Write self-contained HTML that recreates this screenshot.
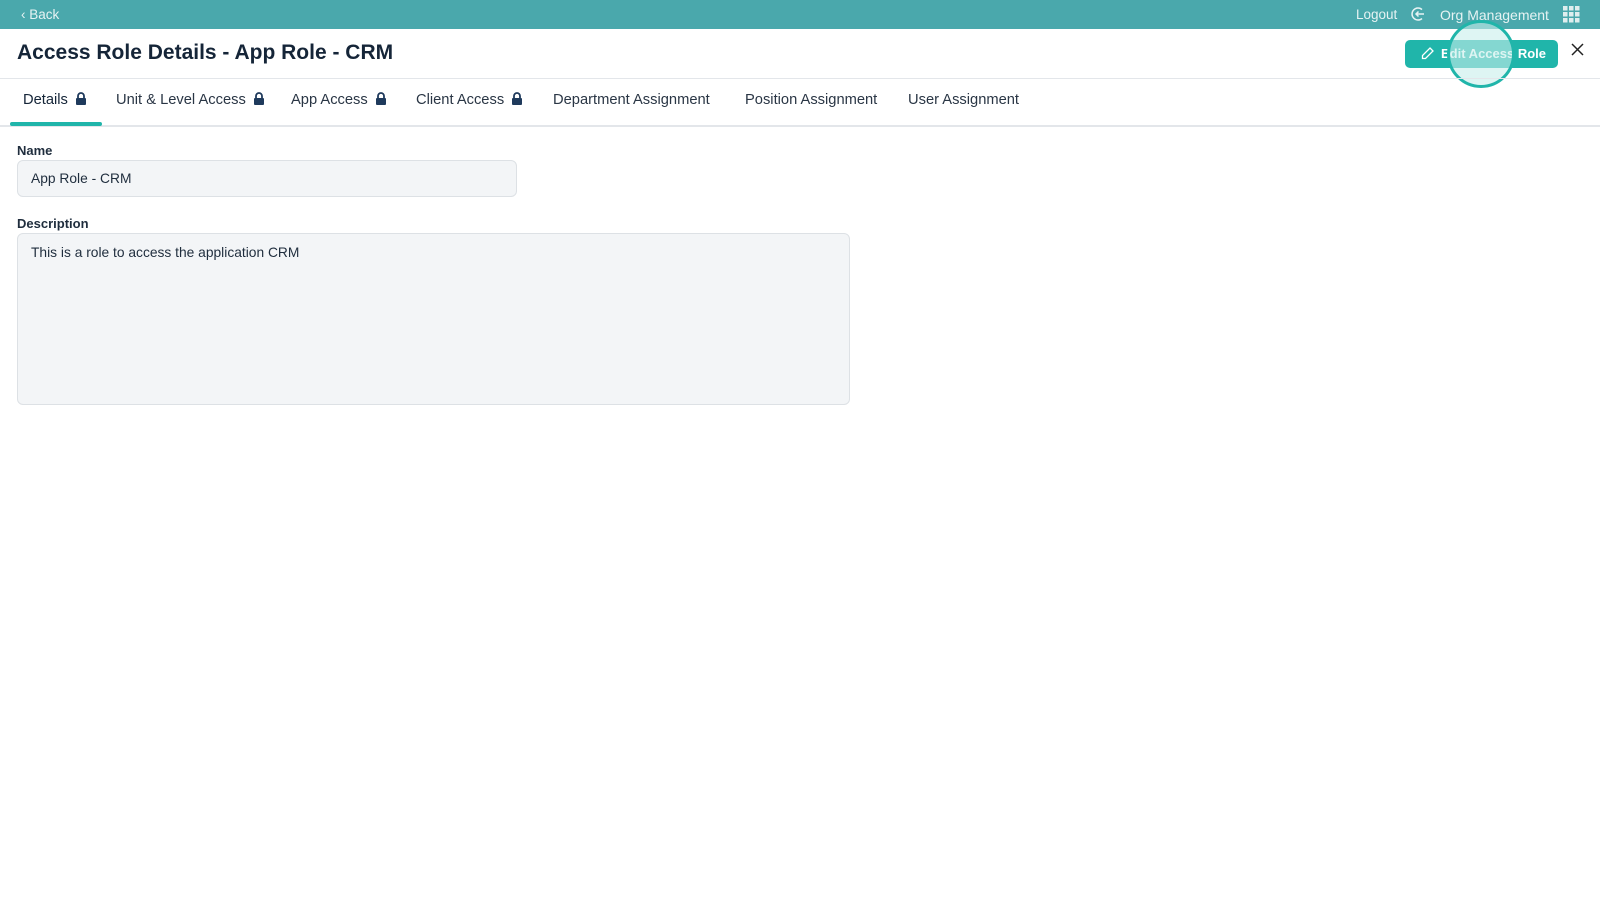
<!DOCTYPE html>
<html><head><style>
*{box-sizing:border-box;margin:0;padding:0}
body{width:1600px;height:900px;background:#fff;font-family:"Liberation Sans",sans-serif;color:#1f2d3d;position:relative;overflow:hidden}
.top{position:absolute;left:0;top:0;width:1600px;height:29px;background:#4aa8ac;color:#e6f3f3;font-size:13.5px}
.abs{position:absolute}
.tab{position:absolute;top:92px;font-size:14.7px;color:#2a3645;white-space:nowrap}
.lock{display:inline-block;vertical-align:-1px;margin-left:7px}
.lbl{position:absolute;font-size:13px;font-weight:bold;color:#1f2d3d}
.inp{position:absolute;background:#f3f5f7;border:1px solid #dde1e5;border-radius:6px;font-size:13.8px;color:#1f2d3d;padding-left:13px}
</style></head><body>
<div class="top">
<div class="abs" style="left:21px;top:7px">‹ Back</div>
<div class="abs" style="left:1356px;top:7px">Logout</div>
<svg class="abs" style="left:1410px;top:6px" width="16" height="16" viewBox="0 0 16 16" fill="none" stroke="#e6f3f3" stroke-width="1.5"><path d="M12 3.5A6 6 0 1 0 12 12.5"/><path d="M14 8H6M8.5 5.5L6 8l2.5 2.5"/></svg>
<div class="abs" style="left:1440px;top:7px;font-size:14px">Org Management</div>
<svg class="abs" style="left:1563px;top:6px" width="17" height="17" viewBox="0 0 17 17" fill="#dfeeee"><rect x="0" y="0" width="4.5" height="4.5"/><rect x="6" y="0" width="4.5" height="4.5"/><rect x="12" y="0" width="4.5" height="4.5"/><rect x="0" y="6" width="4.5" height="4.5"/><rect x="6" y="6" width="4.5" height="4.5"/><rect x="12" y="6" width="4.5" height="4.5"/><rect x="0" y="12" width="4.5" height="4.5"/><rect x="6" y="12" width="4.5" height="4.5"/><rect x="12" y="12" width="4.5" height="4.5"/></svg>
</div>
<div class="abs" style="left:17px;top:41px;font-size:21px;font-weight:bold;color:#152538">Access Role Details - App Role - CRM</div>
<div class="abs" style="left:1405px;top:40px;width:153px;height:28px;background:#20b5aa;border-radius:5px;color:#fff;font-size:13px;font-weight:bold;line-height:28px;padding-left:36px">Edit Access Role</div>
<svg class="abs" style="left:1420px;top:46px" width="15" height="15" viewBox="0 0 15 15" fill="none" stroke="#fff" stroke-width="1.3"><path d="M10 2l3 3-7.5 7.5H2.5v-3z"/></svg>
<div class="abs" style="left:1447px;top:20px;width:68px;height:68px;border-radius:50%;border:3px solid #20b5aa;background:rgba(200,238,235,0.6)"></div>
<svg class="abs" style="left:1571px;top:43px" width="13" height="13" viewBox="0 0 13 13" stroke="#222" stroke-width="1.5"><path d="M1 1l11 11M12 1L1 12"/></svg>
<div class="abs" style="left:0;top:78px;width:1600px;height:1px;background:#e3e6ea"></div>
<div class="abs" style="left:0;top:125px;width:1600px;height:2px;background:#e3e6ea"></div>
<div class="abs" style="left:10px;top:122px;width:92px;height:4px;background:#20b5aa;border-radius:3px"></div>
<div class="tab" style="left:23px;color:#152538">Details<svg class="lock" width="12" height="13" viewBox="0 0 12 13"><path d="M3 6V4a3 3 0 0 1 6 0v2" fill="none" stroke="#1f3a5c" stroke-width="1.8"/><rect x="1" y="6" width="10" height="7" rx="1" fill="#1f3a5c"/></svg></div>
<div class="tab" style="left:116px">Unit &amp; Level Access<svg class="lock" width="12" height="13" viewBox="0 0 12 13"><path d="M3 6V4a3 3 0 0 1 6 0v2" fill="none" stroke="#1f3a5c" stroke-width="1.8"/><rect x="1" y="6" width="10" height="7" rx="1" fill="#1f3a5c"/></svg></div>
<div class="tab" style="left:291px">App Access<svg class="lock" width="12" height="13" viewBox="0 0 12 13"><path d="M3 6V4a3 3 0 0 1 6 0v2" fill="none" stroke="#1f3a5c" stroke-width="1.8"/><rect x="1" y="6" width="10" height="7" rx="1" fill="#1f3a5c"/></svg></div>
<div class="tab" style="left:416px">Client Access<svg class="lock" width="12" height="13" viewBox="0 0 12 13"><path d="M3 6V4a3 3 0 0 1 6 0v2" fill="none" stroke="#1f3a5c" stroke-width="1.8"/><rect x="1" y="6" width="10" height="7" rx="1" fill="#1f3a5c"/></svg></div>
<div class="tab" style="left:553px">Department Assignment</div>
<div class="tab" style="left:745px">Position Assignment</div>
<div class="tab" style="left:908px">User Assignment</div>
<div class="lbl" style="left:17px;top:143px">Name</div>
<div class="inp" style="left:17px;top:160px;width:500px;height:37px;line-height:35px">App Role - CRM</div>
<div class="lbl" style="left:17px;top:216px">Description</div>
<div class="inp" style="left:17px;top:233px;width:833px;height:172px;padding-top:11px">This is a role to access the application CRM</div>
</body></html>
